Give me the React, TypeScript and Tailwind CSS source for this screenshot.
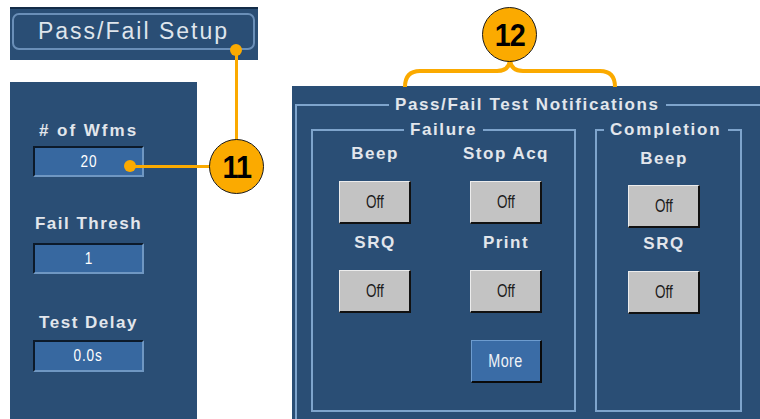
import React from "react";

function Label({ text, className = "" }: { text: string; className?: string }) {
  return (
    <div
      className={`whitespace-nowrap text-center text-[17px] font-bold leading-[20px] tracking-[1.5px] text-[#e2e6ec] ${className}`}
    >
      {text}
    </div>
  );
}

function ValueBox({ value, className = "" }: { value: string; className?: string }) {
  return (
    <div
      className={`flex h-[31px] w-[111px] items-center justify-center border-t-2 border-l-2 border-b-2 border-r-2 border-t-[#0c1a2a] border-l-[#0c1a2a] border-b-[#6f97c2] border-r-[#6f97c2] bg-[#3768a0] text-[16px] tracking-[1px] text-white ${className}`}
    >
      <span className="inline-block scale-x-[0.85]">{value}</span>
    </div>
  );
}

function OffButton({ className = "" }: { className?: string }) {
  return (
    <div
      className={`flex h-[43px] w-[72px] items-center justify-center border-t border-l border-t-[#ececec] border-l-[#ececec] border-b-2 border-r-2 border-b-[#111] border-r-[#111] bg-[#c3c3c3] text-[18px] text-[#1a1a1a] ${className}`}
    >
      <span className="inline-block scale-x-[0.75]">Off</span>
    </div>
  );
}

function Callout({ num, className }: { num: string; className: string }) {
  return (
    <div
      className={`absolute flex h-[55px] w-[55px] items-center justify-center rounded-full border-[1.5px] border-[#1a1a1a] bg-[#fbaa00] text-[32px] font-bold tracking-[-1px] text-black ${className}`}
    >
      <span className="inline-block scale-x-[0.9]">{num}</span>
    </div>
  );
}

export default function App() {
  return (
    <div className="relative h-[419px] w-[760px] overflow-hidden bg-white font-['Liberation_Sans',sans-serif]">
      <div className="flex items-start">
        {/* left column */}
        <div className="flex flex-col pl-[10px] pt-[7px]">
          <div className="h-[53px] w-[248px] border-t-2 border-[#132c48] bg-[#2a4e75] pl-[2px] pt-[4px]">
            <div className="flex h-[37px] w-[243px] items-center justify-center rounded-[7px] border-2 border-[#6a8fb8] text-[23px] tracking-[2px] text-[#dfe5ec]">
              Pass/Fail Setup
            </div>
          </div>
          <div className="mt-[22px] flex h-[337px] w-[187px] flex-col items-start bg-[#2a4e75] pl-[23px]">
            <Label text="# of Wfms" className="mt-[39px] w-[111px] tracking-[2px]" />
            <ValueBox value="20" className="mt-[5px]" />
            <Label text="Fail Thresh" className="mt-[37px] w-[111px]" />
            <ValueBox value="1" className="mt-[9px]" />
            <Label text="Test Delay" className="mt-[39px] w-[111px]" />
            <ValueBox value="0.0s" className="mt-[7px] h-[32px]" />
          </div>
        </div>

        {/* right panel */}
        <div className="ml-[34px] mt-[86px] h-[333px] w-[468px] overflow-hidden bg-[#2a4e75]">
          <fieldset className="ml-[3px] mt-[9px] h-[340px] w-[475px] border-2 border-[#7ea4cc] p-0">
            <legend className="ml-[92px] px-[6px] text-[17px] font-bold leading-[20px] tracking-[1.6px] text-[#e2e6ec]">
              Pass/Fail Test Notifications
            </legend>
            <div className="ml-[14px] mt-[5px] flex gap-[19px]">
              <fieldset className="w-[265px] border-2 border-[#7ea4cc] p-0">
                <legend className="ml-[91px] px-[6px] text-[17px] font-bold leading-[20px] tracking-[1.6px] text-[#e2e6ec]">
                  Failure
                </legend>
                <div className="flex h-[270px] gap-[59px] pl-[26px]">
                  <div className="flex w-[72px] flex-col items-center">
                    <Label text="Beep" className="mt-[4px]" />
                    <OffButton className="mt-[17px]" />
                    <Label text="SRQ" className="mt-[9px]" />
                    <OffButton className="mt-[17px]" />
                  </div>
                  <div className="flex w-[72px] flex-col items-center">
                    <Label text="Stop Acq" className="mt-[4px]" />
                    <OffButton className="mt-[17px]" />
                    <Label text="Print" className="mt-[9px]" />
                    <OffButton className="mt-[17px]" />
                    <div className="mt-[27px] flex h-[43px] w-[71px] items-center justify-center border-t border-l border-t-[#6d9ccf] border-l-[#6d9ccf] border-b-2 border-r-2 border-b-[#0a0a0a] border-r-[#0a0a0a] bg-[#3a6ca6] text-[18px] tracking-[0.5px] text-[#eef2f6]">
                      <span className="inline-block scale-x-[0.8]">More</span>
                    </div>
                  </div>
                </div>
              </fieldset>
              <fieldset className="w-[147px] border-2 border-[#7ea4cc] p-0">
                <legend className="ml-[7px] px-[6px] text-[17px] font-bold leading-[20px] tracking-[1.8px] text-[#e2e6ec]">
                  Completion
                </legend>
                <div className="flex h-[270px] flex-col items-center pl-[31px] pr-[40px]">
                  <Label text="Beep" className="mt-[9px]" />
                  <OffButton className="mt-[16px] h-[42px]" />
                  <Label text="SRQ" className="mt-[6px]" />
                  <OffButton className="mt-[17px]" />
                </div>
              </fieldset>
            </div>
          </fieldset>
        </div>
      </div>

      {/* callout 11 */}
      <div className="absolute left-[230px] top-[44px] h-[12px] w-[12px] rounded-full bg-[#fbaa00]" />
      <div className="absolute left-[235px] top-[50px] h-[91px] w-[3px] bg-[#fbaa00]" />
      <div className="absolute left-[124px] top-[160px] h-[12px] w-[12px] rounded-full bg-[#fbaa00]" />
      <div className="absolute left-[130px] top-[165px] h-[3px] w-[80px] bg-[#fbaa00]" />
      <Callout num="11" className="left-[209px] top-[139px]" />

      {/* callout 12 */}
      <svg className="absolute left-0 top-0" width="760" height="100" viewBox="0 0 760 100">
        <path
          d="M405 87 Q405 71 420 71 L497 71 Q509 71 510 60 Q511 71 523 71 L600 71 Q615 71 615 87"
          fill="none"
          stroke="#fbaa00"
          strokeWidth="4"
        />
      </svg>
      <Callout num="12" className="left-[482px] top-[7px]" />
    </div>
  );
}
